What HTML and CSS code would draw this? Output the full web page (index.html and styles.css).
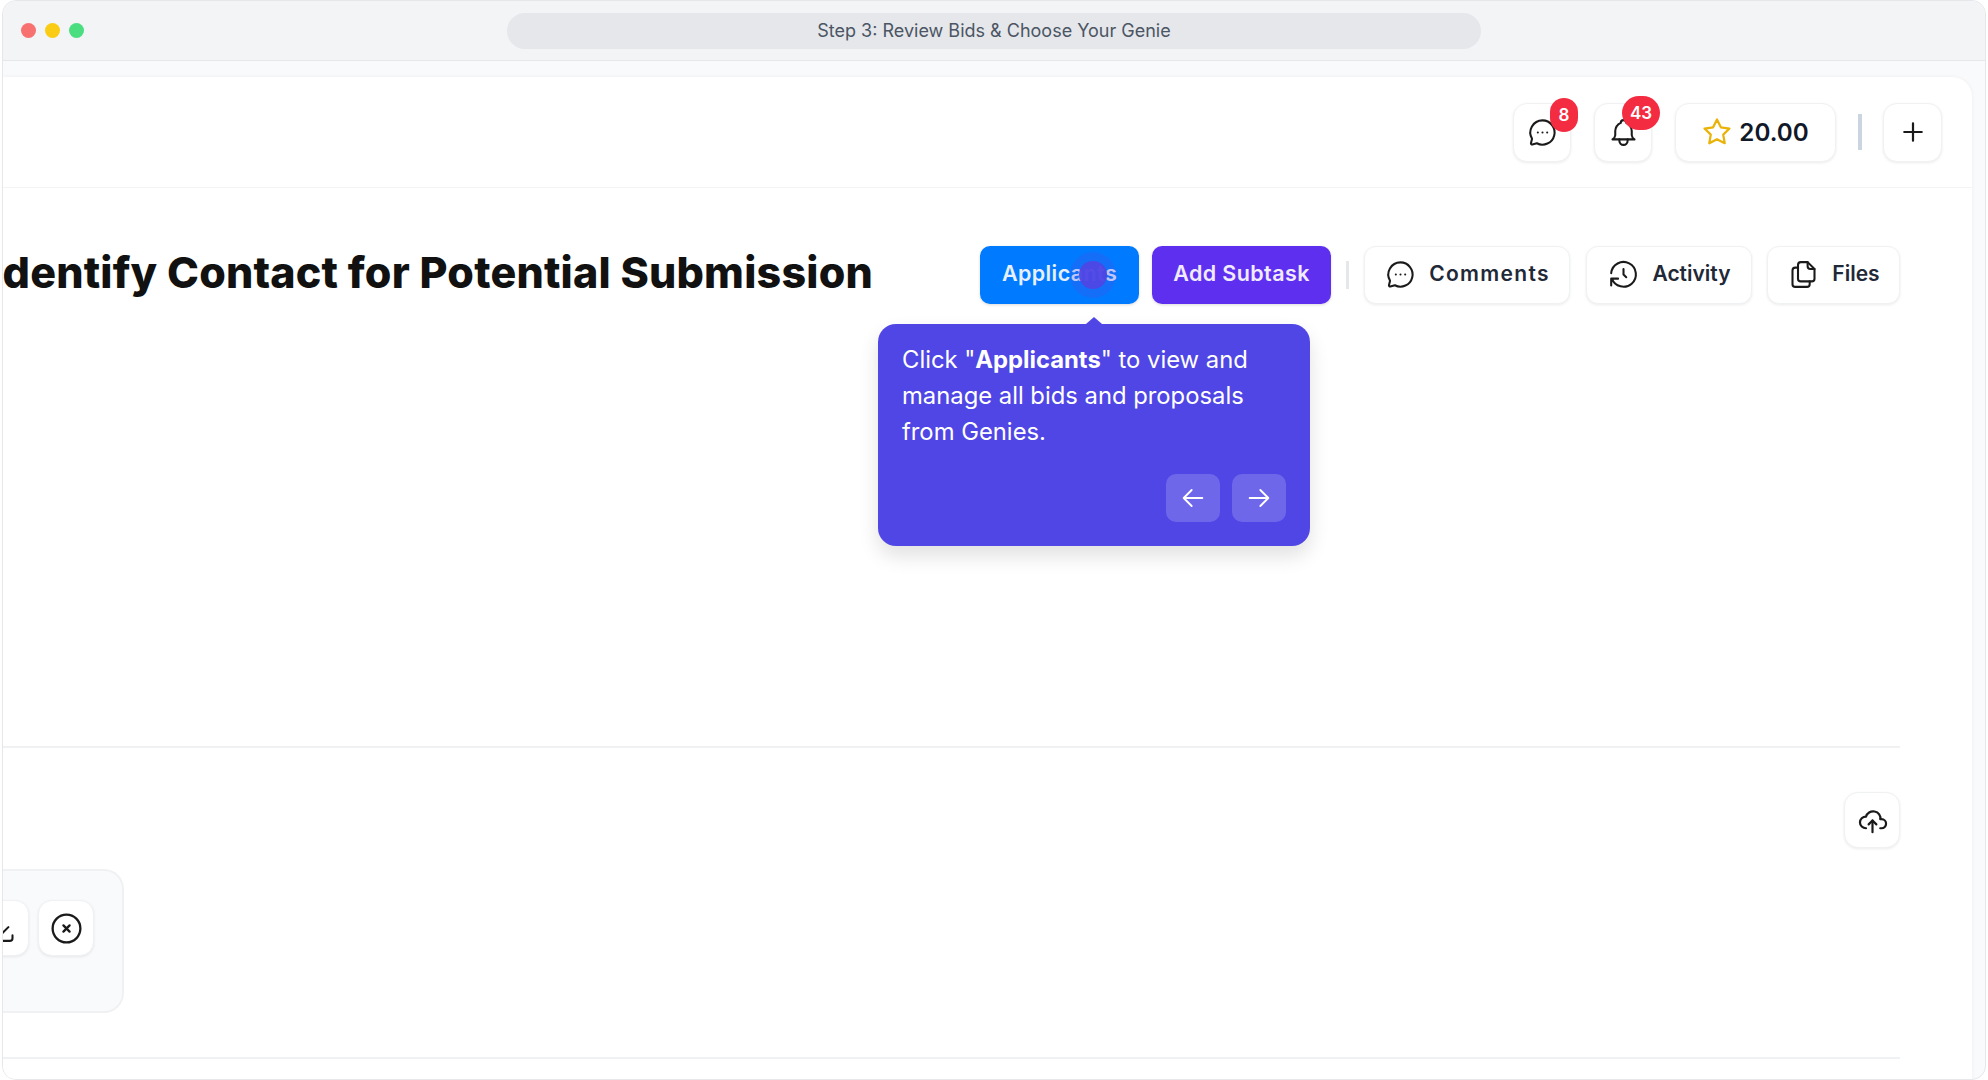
FILE: index.html
```html
<!DOCTYPE html>
<html lang="en">
<head>
<meta charset="utf-8">
<title>Step 3: Review Bids &amp; Choose Your Genie</title>
<link rel="stylesheet" href="styles.css">
</head>
<body>
<div class="window">
  <div class="titlebar">
    <div class="dots"><span class="dot red"></span><span class="dot yellow"></span><span class="dot green"></span></div>
    <div class="address">Step 3: Review Bids &amp; Choose Your Genie</div>
  </div>
  <div class="stage">
    <div class="panel">
      <header class="topbar">
        <button class="tile tile-square">
          <svg class="icon" viewBox="0 0 24 24"><path d="M12 3.2a8.8 8.8 0 1 1-4.1 16.6L4.6 20.7a.8.8 0 0 1-1-.9l.8-3.3A8.8 8.8 0 0 1 12 3.2z"/><path d="M8.6 12h.01M12 12h.01M15.4 12h.01"/></svg>
          <span class="badge badge-one">8</span>
        </button>
        <button class="tile tile-square">
          <svg class="icon" viewBox="0 0 24 24"><path d="M10 5a2 2 0 1 1 4 0a7 7 0 0 1 4 6v3a4 4 0 0 0 2 3h-16a4 4 0 0 0 2-3v-3a7 7 0 0 1 4-6"/><path d="M9 17v1a3 3 0 0 0 6 0v-1"/></svg>
          <span class="badge badge-two">43</span>
        </button>
        <button class="tile tile-credit">
          <svg class="icon star" viewBox="0 0 24 24"><path d="M12 17.75l-6.172 3.245l1.179-6.873l-5-4.867l6.9-1l3.086-6.253l3.086 6.253l6.9 1l-5 4.867l1.179 6.873z"/></svg>
          <span class="credit">20.00</span>
        </button>
        <span class="rule-top"></span>
        <button class="tile tile-add">
          <svg class="icon icon-plus" viewBox="0 0 24 24"><path d="M12 4.5v15M4.5 12h15"/></svg>
        </button>
      </header>

      <section class="task">
        <div class="task-head">
          <div class="title-clip"><h1 class="title">Identify Contact for Potential Submission</h1></div>
          <div class="actions">
            <button class="cta cta-blue">Applicants<span class="pulse"><span class="pulse-core"></span></span></button>
            <button class="cta cta-violet">Add Subtask</button>
            <span class="rule-mid"></span>
            <button class="chip chip-comments">
              <svg class="icon" viewBox="0 0 24 24"><path d="M12 3.2a8.8 8.8 0 1 1-4.1 16.6L4.6 20.7a.8.8 0 0 1-1-.9l.8-3.3A8.8 8.8 0 0 1 12 3.2z"/><path d="M8.6 12h.01M12 12h.01M15.4 12h.01"/></svg>
              <span class="chip-label chip-label-wide">Comments</span>
            </button>
            <button class="chip chip-activity">
              <svg class="icon" viewBox="0 0 24 24"><path d="M12 8v4l2 2"/><path d="M3.05 11a9 9 0 1 1 .5 4m-.5 5v-5h5"/></svg>
              <span class="chip-label">Activity</span>
            </button>
            <button class="chip chip-files">
              <svg class="icon" viewBox="0 0 24 24"><path d="M10 17a2 2 0 0 1-2-2V5a2 2 0 0 1 2-2h5l5 5v7a2 2 0 0 1-2 2z"/><path d="M15 3v3a2 2 0 0 0 2 2h3"/><path d="M16.5 17v2a2 2 0 0 1-2 2H6a2 2 0 0 1-2-2V9a2 2 0 0 1 2-2h2"/></svg>
              <span class="chip-label">Files</span>
            </button>
          </div>
        </div>
      </section>

      <section class="uploads">
        <button class="tile tile-upload">
          <svg class="icon icon-cloud" viewBox="0 0 24 24"><path d="M7 18a4.6 4.4 0 0 1 0-9a5 4.5 0 0 1 11 2h1a3.5 3.5 0 0 1 0 7h-1"/><path d="M9 15l3-3l3 3"/><path d="M12 12v9"/></svg>
        </button>
        <div class="file-card">
          <button class="tile tile-upload">
            <svg class="icon" viewBox="0 0 24 24"><path d="M4 17v2a2 2 0 0 0 2 2h12a2 2 0 0 0 2-2v-2"/><path d="M7 11l5 5l5-5"/><path d="M12 4v12"/></svg>
          </button>
          <button class="tile tile-upload">
            <svg class="icon icon-close" viewBox="0 0 24 24"><circle cx="12" cy="12" r="9"/><path d="M10 10l4 4m0-4l-4 4"/></svg>
          </button>
        </div>
      </section>

      <div class="tour">
        <span class="tour-arrow"></span>
        <p class="tour-text">Click "<strong>Applicants</strong>" to view and manage all bids and proposals from Genies.</p>
        <div class="tour-nav">
          <button class="tour-btn"><svg class="tour-icon" viewBox="0 0 24 24"><path d="M19 12H5M11 6l-6 6l6 6"/></svg></button>
          <button class="tour-btn"><svg class="tour-icon" viewBox="0 0 24 24"><path d="M5 12h14M13 6l6 6l-6 6"/></svg></button>
        </div>
      </div>
    </div>
  </div>
</div>
</body>
</html>
```
FILE: styles.css
```css
* { box-sizing: border-box; }
html, body { margin: 0; padding: 0; background: #fff; }
body { font-family: "Inter", "Liberation Sans", sans-serif; }
button { font-family: inherit; cursor: pointer; }

.window {
  margin-left: 2px;
  width: 1984px;
  height: 1080px;
  border: 1px solid #e5e7eb;
  border-radius: 14px;
  overflow: hidden;
  display: flex;
  flex-direction: column;
  background: #f9fafb;
}

.titlebar {
  flex: 0 0 60px;
  display: grid;
  grid-template-columns: 504px 974px 1fr;
  align-items: center;
  background: #f3f4f6;
  border-bottom: 1px solid #e5e7eb;
}
.dots { display: flex; gap: 9px; padding-left: 18px; }
.dot { width: 15px; height: 15px; border-radius: 50%; }
.red { background: #f87171; }
.yellow { background: #facc15; }
.green { background: #4ade80; }
.address {
  height: 36px;
  border-radius: 18px;
  background: #e5e7eb;
  color: #4b5563;
  font-size: 18px;
  display: flex;
  align-items: center;
  justify-content: center;
}

.stage { flex: 1; padding: 16px 13px 0 0; min-height: 0; }
.panel {
  position: relative;
  height: 100%;
  background: #fff;
  border-top-right-radius: 20px;
  box-shadow: 0 0 4px rgba(0, 0, 0, .05);
  display: flex;
  flex-direction: column;
}

.topbar {
  flex: 0 0 111px;
  display: flex;
  align-items: center;
  justify-content: flex-end;
  padding: 0 30px 0 0;
  border-bottom: 1px solid #f3f4f6;
}
.tile {
  position: relative;
  display: flex;
  align-items: center;
  justify-content: center;
  background: #fff;
  border: 1px solid #f0f1f3;
  border-radius: 14px;
  box-shadow: 0 1px 3px rgba(0, 0, 0, .08);
  padding: 0;
  color: #111827;
}
.tile-square { width: 58px; height: 59px; margin-right: 23px; }
.tile-add { width: 59px; height: 59px; }
.tile-credit { width: 161px; height: 59px; gap: 7px; margin-right: 22px; }
.tile-upload { width: 56px; height: 56px; flex: none; }

.icon {
  width: 33px;
  height: 33px;
  flex: none;
  fill: none;
  stroke: #1a1a1a;
  stroke-width: 1.5;
  stroke-linecap: round;
  stroke-linejoin: round;
}
.icon-plus { width: 28px; height: 28px; stroke-width: 1.9; }
.icon-cloud { width: 31px; height: 31px; stroke-width: 1.7; }
.star { width: 30px; height: 30px; stroke: #eab308; stroke-width: 1.8; }
.icon-close { width: 37px; height: 37px; stroke-width: 1.5; }
.credit { font-size: 24.2px; font-weight: 600; color: #111827; }
.rule-top { width: 4px; height: 36px; background: #cbd5e1; margin-right: 21px; }

.badge {
  position: absolute;
  display: flex;
  align-items: center;
  justify-content: center;
  height: 34px;
  border-radius: 17px;
  background: #f42c42;
  color: #fff;
  font-size: 17px;
  font-weight: 600;
}
.badge-one { width: 28px; top: -6px; right: -8px; }
.badge-two { width: 38px; top: -8px; right: -9px; }

.task { flex: 0 0 558px; padding-top: 55px; padding-right: 72px; }
.task-head { display: flex; align-items: center; justify-content: space-between; }
.title-clip { width: 870px; overflow: hidden; display: flex; justify-content: flex-end; padding-bottom: 5px; }
.title {
  margin: 0;
  flex: none;
  white-space: nowrap;
  font-size: 43px;
  font-weight: 800;
  line-height: 58px;
  letter-spacing: .2px;
  color: #111;
}
.actions { display: flex; align-items: center; }
.cta {
  position: relative;
  height: 58px;
  border: 0;
  border-radius: 10px;
  padding: 0 0 3px;
  color: #fff;
  font-size: 21.5px;
  font-weight: 600;
  letter-spacing: .4px;
  box-shadow: 0 1px 3px rgba(0, 0, 0, .15);
}
.cta-blue { width: 159px; background: #007bff; margin-right: 13px; color: #e6f0ff; }
.cta-violet { width: 179px; background: #5f2ff0; color: #f0ebff; }
.pulse {
  position: absolute;
  left: 90px;
  top: 6px;
  width: 46px;
  height: 46px;
  border-radius: 50%;
  background: rgba(79, 70, 229, .25);
  display: flex;
  align-items: center;
  justify-content: center;
}
.pulse-core { width: 28px; height: 28px; border-radius: 50%; background: rgba(79, 70, 229, .95); }
.rule-mid { width: 3px; height: 28px; background: #e5e7eb; margin: 0 15px; }
.chip {
  height: 58px;
  display: flex;
  align-items: center;
  justify-content: center;
  gap: 12px;
  background: #fff;
  border: 1px solid #f0f1f3;
  border-radius: 12px;
  box-shadow: 0 1px 3px rgba(0, 0, 0, .08);
  color: #1f2937;
  font-size: 21px;
  font-weight: 600;
  padding: 0;
}
.chip-label { padding-bottom: 3px; }
.chip-label-wide { letter-spacing: 1.3px; }
.chip-comments { width: 206px; margin-right: 16px; }
.chip-activity { width: 166px; margin-right: 15px; }
.chip-files { width: 133px; }

.uploads {
  height: 313px;
  display: flex;
  flex-direction: column;
  border-top: 2px solid #f0f1f3;
  border-bottom: 2px solid #f0f1f3;
  margin-right: 72px;
  padding-top: 44px;
}
.uploads > .tile-upload { align-self: flex-end; }
.file-card {
  margin-top: 21px;
  width: 121px;
  height: 144px;
  display: flex;
  justify-content: flex-end;
  align-items: flex-start;
  gap: 9px;
  padding: 29px 28px 0 0;
  background: #f9fafb;
  border: 2px solid #f0f1f3;
  border-left: 0;
  border-radius: 0 20px 20px 0;
  overflow: hidden;
}

.tour {
  position: absolute;
  left: 875px;
  top: 247px;
  width: 432px;
  height: 222px;
  padding: 24px;
  background: #4f46e5;
  border-radius: 18px;
  box-shadow: 0 10px 20px rgba(0, 0, 0, .12);
  color: #fff;
  display: flex;
  flex-direction: column;
  justify-content: space-between;
}
.tour-arrow {
  position: absolute;
  top: -7px;
  left: 208px;
  border-left: 8px solid transparent;
  border-right: 8px solid transparent;
  border-bottom: 7px solid #4f46e5;
}
.tour-text { margin: -6px 0 0; font-size: 23.8px; line-height: 35.8px; }
.tour-text strong { font-weight: 700; }
.tour-nav { display: flex; justify-content: flex-end; gap: 12px; }
.tour-btn {
  width: 54px;
  height: 48px;
  border: 0;
  padding: 0;
  border-radius: 10px;
  background: rgba(255, 255, 255, .18);
  display: flex;
  align-items: center;
  justify-content: center;
}
.tour-icon {
  width: 32px;
  height: 32px;
  fill: none;
  stroke: #fff;
  stroke-width: 1.4;
  stroke-linecap: round;
  stroke-linejoin: round;
}
```
